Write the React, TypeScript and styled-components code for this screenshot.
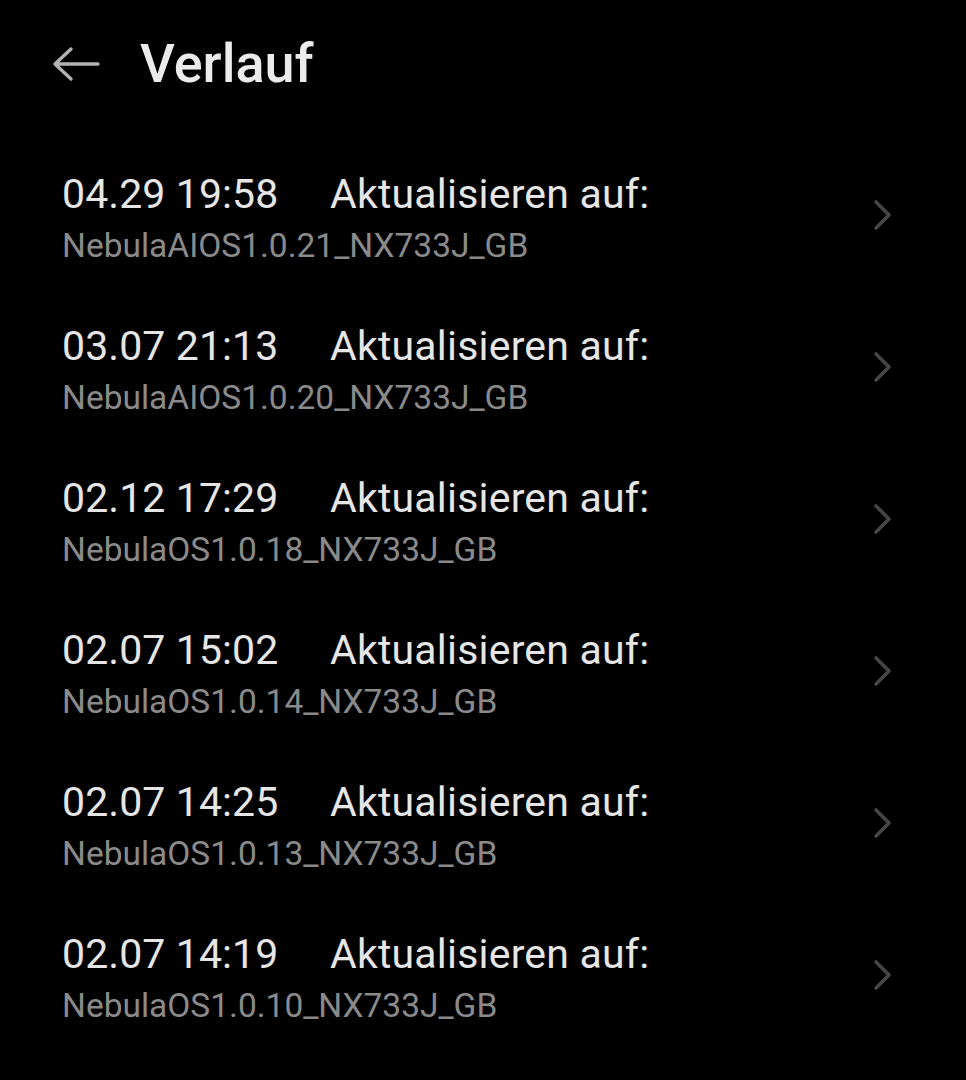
import styled, { createGlobalStyle } from "styled-components";

const GlobalStyle = createGlobalStyle`
  html, body {
    margin: 0;
    padding: 0;
    background: #000;
  }
  body {
    font-family: Roboto, "Noto Sans", "Liberation Sans", sans-serif;
    color: #e6e6e6;
  }
`;

type HistoryEntry = {
  time: string;
  version: string;
};

const entries: HistoryEntry[] = [
  { time: "04.29 19:58", version: "NebulaAIOS1.0.21_NX733J_GB" },
  { time: "03.07 21:13", version: "NebulaAIOS1.0.20_NX733J_GB" },
  { time: "02.12 17:29", version: "NebulaOS1.0.18_NX733J_GB" },
  { time: "02.07 15:02", version: "NebulaOS1.0.14_NX733J_GB" },
  { time: "02.07 14:25", version: "NebulaOS1.0.13_NX733J_GB" },
  { time: "02.07 14:19", version: "NebulaOS1.0.10_NX733J_GB" },
];

const BackArrow = () => (
  <svg width="48" height="36" viewBox="0 0 48 36" fill="none">
    <path
      d="M3 18H46M19 3L3 18L19 33"
      stroke="#b3b3b3"
      strokeWidth="3.4"
      strokeLinecap="round"
      strokeLinejoin="round"
    />
  </svg>
);

const Chevron = () => (
  <svg width="20" height="34" viewBox="0 0 20 34" fill="none">
    <path
      d="M4 4L17 17L4 30"
      stroke="#464646"
      strokeWidth="3.6"
      strokeLinecap="round"
      strokeLinejoin="round"
    />
  </svg>
);

export default function App() {
  return (
    <>
      <GlobalStyle />
      <Page>
        <Header>
          <BackButton>
            <BackArrow />
          </BackButton>
          <Title>Verlauf</Title>
        </Header>
        <List>
          {entries.map((e) => (
            <Row key={e.time + e.version}>
              <RowText>
                <MainLine>
                  <Time>{e.time}</Time>
                  <Label>Aktualisieren auf:</Label>
                </MainLine>
                <Version>{e.version}</Version>
              </RowText>
              <ChevronBox>
                <Chevron />
              </ChevronBox>
            </Row>
          ))}
        </List>
      </Page>
    </>
  );
}

const Page = styled.div`
  width: 966px;
  min-height: 1080px;
  background: #000;
`;

const Header = styled.div`
  display: flex;
  align-items: center;
  gap: 40px;
  padding: 32px 0 46px 52px;
  height: 64px;
`;

const BackButton = styled.div`
  display: flex;
  align-items: center;
  width: 48px;
  height: 36px;
`;

const Title = styled.h1`
  margin: 0;
  font-size: 54px;
  line-height: 64px;
  font-weight: 500;
  color: #ebebeb;
`;

const List = styled.div`
  display: flex;
  flex-direction: column;
`;

const Row = styled.div`
  display: flex;
  align-items: center;
  justify-content: space-between;
  padding: 28px 74px 28px 62px;
`;

const RowText = styled.div`
  display: flex;
  flex-direction: column;
  gap: 8px;
`;

const MainLine = styled.div`
  display: flex;
  font-size: 41px;
  line-height: 48px;
  color: #e6e6e6;
`;

const Time = styled.span`
  width: 268px;
  letter-spacing: 0.1px;
`;

const Label = styled.span`
  letter-spacing: 0.2px;
`;

const Version = styled.div`
  font-size: 33.5px;
  line-height: 40px;
  color: #8a8a8a;
`;

const ChevronBox = styled.div`
  display: flex;
  margin-bottom: 7px;
`;
